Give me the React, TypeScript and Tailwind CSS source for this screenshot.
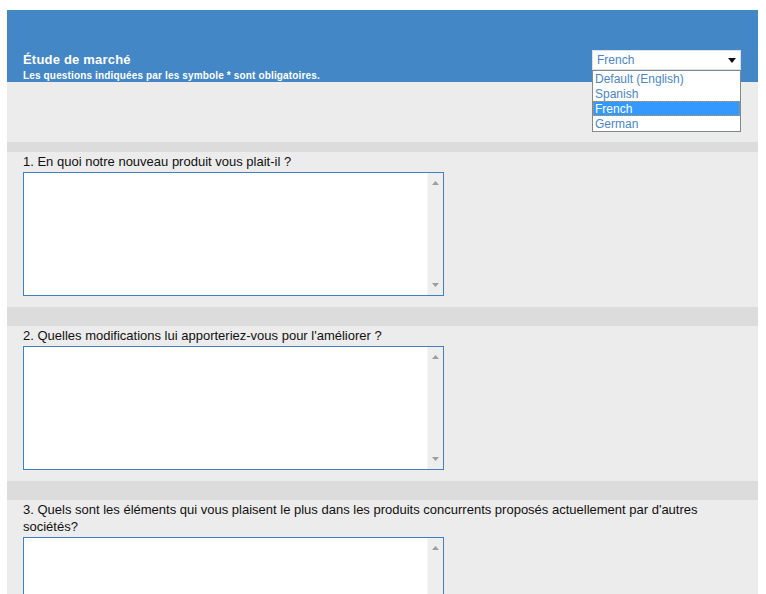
import React from "react";

const questions = [
  "1. En quoi notre nouveau produit vous plait-il ?",
  "2. Quelles modifications lui apporteriez-vous pour l'améliorer ?",
  "3. Quels sont les éléments qui vous plaisent le plus dans les produits concurrents proposés actuellement par d'autres sociétés?",
];

const languages = ["Default (English)", "Spanish", "French", "German"];

const TextBox = () => (
  <div className="flex h-[124px] w-[421px] border border-[#3f80c4] bg-white">
    <textarea className="flex-1 resize-none bg-white outline-none" />
    {/* fake scrollbar */}
    <div className="flex w-[16px] flex-col items-center justify-between border-l border-[#f6f6f6] bg-[#eeeeee] pt-[8px] pb-[8px]">
      <svg width="7" height="4" viewBox="0 0 7 4">
        <path d="M0 4 L3.5 0 L7 4 Z" fill="#9e9e9e" />
      </svg>
      <svg width="7" height="4" viewBox="0 0 7 4">
        <path d="M0 0 L7 0 L3.5 4 Z" fill="#9e9e9e" />
      </svg>
    </div>
  </div>
);

export default function App() {
  return (
    <div
      className="min-h-screen bg-white pt-[10px] pr-[8px] pl-[7px]"
      style={{ fontFamily: '"Liberation Sans", Arial, sans-serif' }}
    >
      <div className="min-h-[600px] bg-[#ececec]">
        {/* Header */}
        <div className="relative h-[72px] bg-[#4387c6] pt-[42px] pl-[16px] text-white">
          <div className="text-[13px] font-bold leading-[15px] tracking-[0.2px]">Étude de marché</div>
          <div className="mt-[4px] text-[10px] font-bold leading-[10px] tracking-[0.15px]">
            Les questions indiquées par les symbole * sont obligatoires.
          </div>

          {/* Language select, open */}
          <div className="absolute top-[40px] right-[17px] w-[149px] text-[12px] leading-[15px]">
            <div className="flex h-[20px] items-center justify-between border border-[#d9e2ec] bg-white pr-[4px] pl-[4px] text-[#4a86c8]">
              <span>French</span>
              <svg width="8" height="5" viewBox="0 0 8 5">
                <path d="M0 0 L8 0 L4 5 Z" fill="#111" />
              </svg>
            </div>
            <div className="border border-[#808890] bg-white">
              {languages.map((l) => (
                <div
                  key={l}
                  className={
                    l === "French"
                      ? "h-[15px] border border-dotted border-[#d98c3a] bg-[#3399ff] pl-[1px] leading-[14px] text-white"
                      : "h-[15px] pl-[2px] leading-[16px] text-[#4a86c8]"
                  }
                >
                  {l}
                </div>
              ))}
            </div>
          </div>
        </div>

        <div className="h-[60px]" />

        {questions.map((q, i) => (
          <div key={q}>
            <div className={i === 0 ? "h-[10px] bg-[#dcdcdc]" : "h-[19px] bg-[#dcdcdc]"} />
            <div className="px-[16px] pt-[1px] pb-[11px]">
              <div className="text-[13px] leading-[17px] text-[#111]">{q}</div>
              <div className="mt-[2px]">
                <TextBox />
              </div>
            </div>
          </div>
        ))}
      </div>
    </div>
  );
}
